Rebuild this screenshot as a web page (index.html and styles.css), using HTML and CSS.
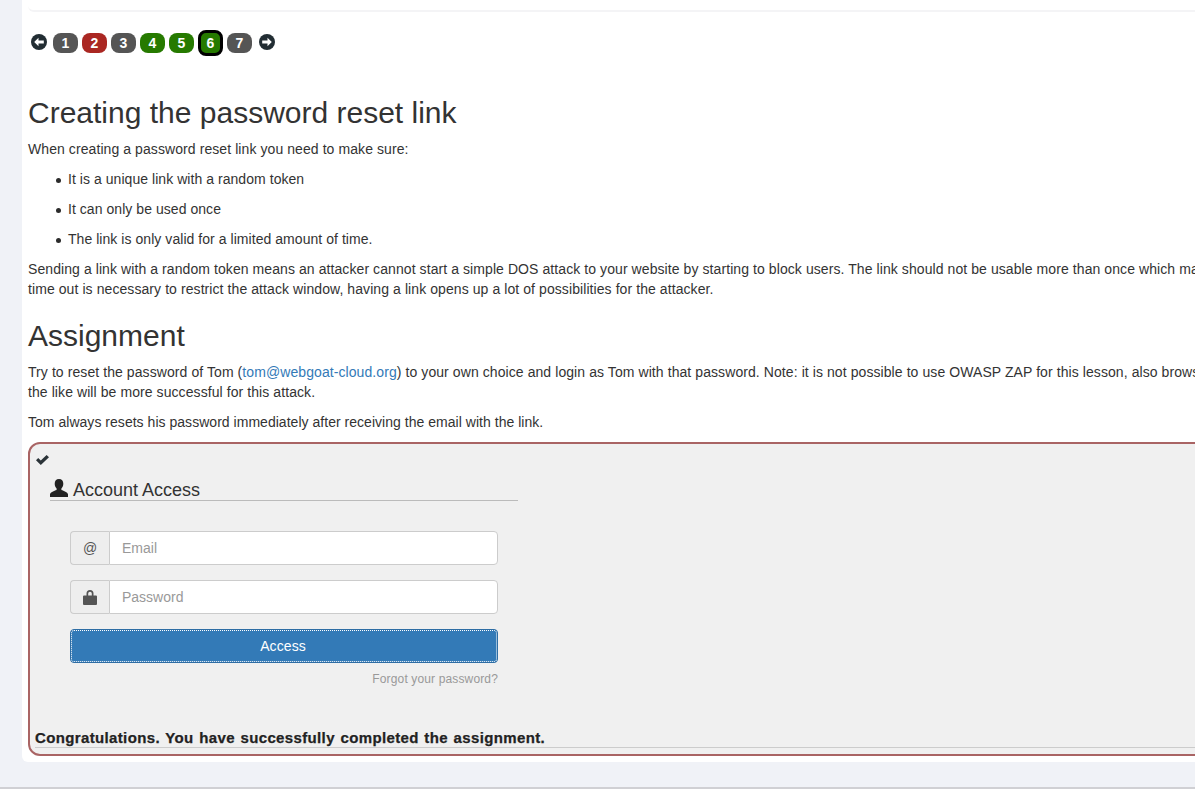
FILE: index.html
```html
<!DOCTYPE html>
<html lang="en">
<head>
    <meta charset="UTF-8">
    <meta name="viewport" content="width=device-width, initial-scale=1.0">
    <title>Password reset</title>
    <link rel="stylesheet" href="styles.css">
</head>
<body>
    <div class="page">
        <div class="lesson-card">
            <div class="top-panel"></div>

            <div class="pager">
                <svg class="arrow arrow-prev" viewBox="0 0 16 16"><circle cx="8" cy="8" r="8" fill="#222d33"/><path d="M3.200 8l4.300-4.300v2.800h5.300v3H7.500v2.800z" fill="#fff"/></svg>
                <span class="step">1</span>
                <span class="step step-wrong">2</span>
                <span class="step">3</span>
                <span class="step step-done">4</span>
                <span class="step step-done">5</span>
                <span class="step step-done step-current">6</span>
                <span class="step">7</span>
                <svg class="arrow arrow-next" viewBox="0 0 16 16"><circle cx="8" cy="8" r="8" fill="#222d33"/><path d="M12.800 8L8.500 3.700v2.800H3.200v3h5.300v2.800z" fill="#fff"/></svg>
            </div>

            <div class="content">
                <h2>Creating the password reset link</h2>
                <p>When creating a password reset link you need to make sure:</p>
                <ul>
                    <li>It is a unique link with a random token</li>
                    <li>It can only be used once</li>
                    <li>The link is only valid for a limited amount of time.</li>
                </ul>
                <p>Sending a link with a random token means an attacker cannot start a simple DOS attack to your website by starting to block users. The link should not be usable more than once which makes it impossible to replay the link. A<br>time out is necessary to restrict the attack window, having a link opens up a lot of possibilities for the attacker.</p>

                <h2 class="assignment-title">Assignment</h2>
                <p>Try to reset the password of Tom (<a href="#">tom@webgoat-cloud.org</a>) to your own choice and login as Tom with that password. Note: it is not possible to use OWASP ZAP for this lesson, also browser tools and<br>the like will be more successful for this attack.</p>
                <p class="note">Tom always resets his password immediately after receiving the email with the link.</p>

                <div class="attack-box">
                    <svg class="check" viewBox="0 0 13 10"><path d="M0 5.300L2.200 3l2.600 2.400L10.600 0 13 2.200 4.800 10z" fill="#2b3338"/></svg>
                    <div class="account">
                        <h4 class="account-title">
                            <svg class="user-icon" viewBox="0 0 18 18"><path d="M9 0c2.800 0 4.300 2 4.300 4.800 0 2-.8 3.700-1.900 4.700v1.500c2.500.9 6.100 2.100 6.600 4.200V18H0v-2.800c.5-2.100 4.100-3.300 6.600-4.200V9.500C5.500 8.500 4.700 6.800 4.700 4.800 4.700 2 6.200 0 9 0z" fill="#222"/></svg>
                            Account Access
                        </h4>
                        <div class="input-row">
                            <span class="addon">@</span>
                            <input class="field" type="text" placeholder="Email">
                        </div>
                        <div class="input-row">
                            <span class="addon">
                                <svg class="lock-icon" viewBox="0 0 14 15"><path d="M3.500 5.500V3.500a3.500 3.500 0 0 1 7 0v2H13a1 1 0 0 1 1 1V14a1 1 0 0 1-1 1H1a1 1 0 0 1-1-1V6.500a1 1 0 0 1 1-1zm1.700 0h3.600v-2a1.800 1.800 0 0 0-3.600 0z" fill="#555" fill-rule="evenodd"/></svg>
                            </span>
                            <input class="field" type="password" placeholder="Password">
                        </div>
                        <button class="access-btn" type="button"><span>Access</span></button>
                        <div class="forgot">Forgot your password?</div>
                    </div>
                    <div class="feedback">Congratulations. You have successfully completed the assignment.</div>
                    <hr class="feedback-rule">
                </div>
            </div>
        </div>
    </div>
    <div class="page-end"></div>
</body>
</html>
```

FILE: styles.css
```css
html, body {
    margin: 0;
    height: 789px;
    overflow: hidden;
}
body {
    background-color: #f0f2f7;
    font-family: "Liberation Sans", Arial, sans-serif;
    font-size: 14px;
    line-height: 20px;
    color: #333;
}
.page {
    height: 787px;
    padding-left: 22px;
    box-sizing: border-box;
}
.page-end {
    height: 2px;
    background: #d0d0d4;
}
.lesson-card {
    width: 1400px;
    height: 762px;
    background: #fff;
    border-radius: 0 0 6px 6px;
}
.top-panel {
    height: 10px;
    margin-left: 6px;
    border-bottom: 2px solid #f4f4f6;
    border-radius: 0 0 0 6px;
}
.pager {
    display: flex;
    align-items: center;
    height: 26px;
    padding: 18px 0 0 9px;
    gap: 4px;
}
.arrow {
    width: 16px;
    height: 16px;
    margin-top: -3px;
}
.arrow-prev {
    margin-right: 2px;
}
.arrow-next {
    margin-left: 3px;
}
.step {
    width: 25px;
    height: 20px;
    border-radius: 8px;
    background: #555;
    color: #fff;
    font-weight: bold;
    text-align: center;
    line-height: 20px;
}
.step-wrong {
    background: #aa2722;
}
.step-done {
    background: #267a00;
}
.step-current {
    width: 19px;
    border: 3px solid #000;
}
.content {
    padding: 20px 0 0 6px;
    white-space: nowrap;
}
h2 {
    font-size: 30px;
    font-weight: 500;
    line-height: 33px;
    margin: 20px 0 10px;
}
p {
    margin: 0 0 10px;
    letter-spacing: .08px;
}
.note {
    letter-spacing: .03px;
}
ul {
    margin: 0 0 10px;
    padding-left: 40px;
    list-style: none;
}
li {
    position: relative;
    margin-bottom: 10px;
    letter-spacing: .05px;
}
li::before {
    content: "";
    position: absolute;
    left: -12px;
    top: 9px;
    width: 5px;
    height: 5px;
    border-radius: 50%;
    background: #2b2b2b;
}
a {
    color: #337ab7;
    text-decoration: none;
}
.attack-box {
    box-sizing: border-box;
    width: 1300px;
    height: 314px;
    border: 2px solid #a96464;
    border-radius: 12px;
    background: #f0f0f0;
    padding: 11px 5px 0;
}
.check {
    display: block;
    width: 13px;
    height: 10px;
    margin-left: 1px;
}
.account {
    width: 468px;
    margin: 11px 0 0 15px;
}
.account-title {
    display: flex;
    align-items: center;
    gap: 5px;
    margin: 0 0 30px;
    padding-top: 4px;
    font-size: 18px;
    font-weight: 500;
    line-height: 20px;
    height: 20px;
    color: #333;
    border-bottom: 1px solid #bbb;
}
.user-icon {
    width: 18px;
    height: 18px;
    margin-top: -4px;
}
.input-row {
    display: flex;
    width: 428px;
    height: 34px;
    margin: 0 0 15px 20px;
}
.addon {
    display: flex;
    align-items: center;
    justify-content: center;
    box-sizing: border-box;
    width: 39px;
    background: #eee;
    border: 1px solid #ccc;
    border-right: 0;
    border-radius: 4px 0 0 4px;
    color: #555;
}
.lock-icon {
    width: 14px;
    height: 15px;
    margin-left: -1px;
}
.field {
    flex: 1;
    min-width: 0;
    box-sizing: border-box;
    padding: 6px 12px;
    border: 1px solid #ccc;
    border-radius: 0 4px 4px 0;
    background: #fff;
    font-family: inherit;
    font-size: 14px;
    color: #555;
    outline: none;
}
.field::placeholder {
    color: #999;
    opacity: 1;
}
.access-btn {
    display: block;
    box-sizing: border-box;
    width: 428px;
    height: 34px;
    margin-left: 20px;
    padding: 0 2px 0 0;
    border: 1px solid #2e6da4;
    border-radius: 4px;
    background: #337ab7;
    outline: 1px dotted #fff;
    outline-offset: -2px;
    color: #fff;
    font-family: inherit;
    font-size: 14px;
    letter-spacing: .1px;
}
.forgot {
    width: 428px;
    margin: 6px 0 0 20px;
    text-align: right;
    font-size: 12px;
    letter-spacing: .14px;
    color: #999;
}
.feedback {
    margin-top: 40px;
    font-size: 15px;
    font-weight: bold;
    line-height: 18px;
    letter-spacing: .36px;
    word-spacing: 1.100px;
    color: #222;
    -webkit-text-stroke: .25px #222;
}
.feedback-rule {
    margin: 0;
    border: 0;
    border-top: 1px solid #ccc;
}
```
